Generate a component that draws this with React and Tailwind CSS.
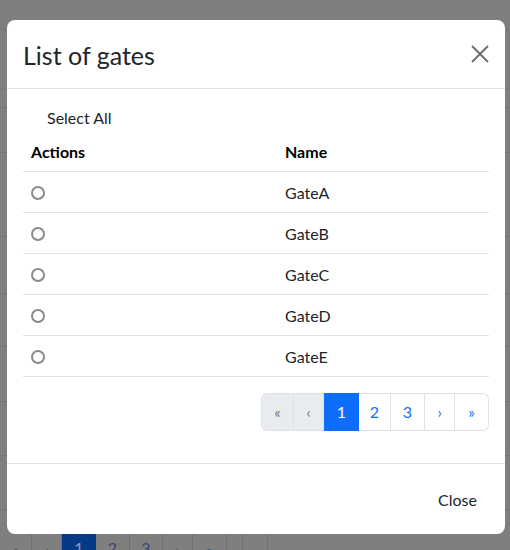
import React from "react";

const font = { fontFamily: '"Segoe UI", Lato, "Noto Sans", sans-serif' };

function Radio() {
  return <span className="block w-[14px] h-[14px] rounded-full border-2 border-[#8a8a8a] bg-white" />;
}

export default function App() {
  const gates = ["GateA", "GateB", "GateC", "GateD", "GateE"];
  const bgLines = [29, 89, 107, 152, 236, 293, 346, 401, 455, 509];
  return (
    <div className="relative w-[510px] h-[550px] overflow-hidden bg-[#7f7f7f]" style={font}>
      {/* background page (dimmed) */}
      {bgLines.map((y) => (
        <div key={y} className="absolute left-0 right-0 h-px bg-[#747474]" style={{ top: y }} />
      ))}
      <div className="absolute left-0 top-[534px] flex h-[40px] text-[#33447a] text-[16px] leading-[20px]">
        <div className="w-[32px] flex justify-center pt-[6px] border-r border-[#707070] text-[13px] text-[#3a3a3a]">«</div>
        <div className="w-[30px] flex justify-center pt-[6px] border-r border-[#707070] text-[13px] text-[#3a3a3a]">‹</div>
        <div className="w-[34px] flex justify-center pt-[4px] bg-[#063a85] text-[#8aa0c0]">1</div>
        <div className="w-[34px] flex justify-center pt-[4px] border-r border-[#707070]">2</div>
        <div className="w-[33px] flex justify-center pt-[4px] border-r border-[#707070]">3</div>
        <div className="w-[30px] flex justify-center pt-[6px] border-r border-[#707070] text-[13px]">›</div>
        <div className="w-[34px] flex justify-center pt-[6px] border-r border-[#707070] text-[13px]">»</div>
        <div className="w-[16px] border-r border-[#707070]" />
        <div className="w-[25px] border-r border-[#707070]" />
      </div>

      {/* modal */}
      <div className="absolute left-[7px] top-[20px] w-[498px] h-[514px] bg-white rounded-[8px] flex flex-col text-[#212529]">
        <div className="h-[69px] flex items-center justify-between px-[16px] border-b border-[#dee2e6]">
          <h4 className="text-[25px] leading-[36px] font-normal pt-[2px]">List of gates</h4>
          <svg width="18" height="18" viewBox="0 0 18 18">
            <path d="M1 1 L17 17 M17 1 L1 17" stroke="#6b6b6b" strokeWidth="1.8" />
          </svg>
        </div>
        <div className="px-[16px] pt-[16px] flex-1">
          <div className="pl-[24px] text-[16px] leading-[24px] pt-[1px] mb-[1px]">Select All</div>
          <div className="text-[16px] leading-[24px]">
            <div className="flex border-b border-[#dee2e6] font-bold text-black">
              <div className="w-[254px] px-[8px] pt-[9px] pb-[7px]">Actions</div>
              <div className="flex-1 px-[8px] pt-[9px] pb-[7px]">Name</div>
            </div>
            {gates.map((g) => (
              <div key={g} className="flex border-b border-[#dee2e6]">
                <div className="w-[254px] px-[8px] pt-[9px] pb-[7px] flex items-center">
                  <Radio />
                </div>
                <div className="flex-1 px-[8px] pt-[9px] pb-[7px]">{g}</div>
              </div>
            ))}
          </div>
          <div className="flex justify-end mt-[16px]">
            <div className="flex h-[38px] text-[16px] leading-[24px]">
              <div className="w-[33px] flex items-center justify-center bg-[#e9ecef] text-[#6c757d] text-[15px] border border-[#dee2e6] rounded-l-[6px]">«</div>
              <div className="w-[30px] flex items-center justify-center bg-[#e9ecef] text-[#6c757d] text-[15px] border border-l-0 border-[#dee2e6]">‹</div>
              <div className="w-[35px] flex items-center justify-center bg-[#0d6efd] text-white border border-[#0d6efd]">1</div>
              <div className="w-[32px] flex items-center justify-center text-[#0d6efd] border-y border-r border-[#dee2e6]">2</div>
              <div className="w-[34px] flex items-center justify-center text-[#0d6efd] border-y border-r border-[#dee2e6]">3</div>
              <div className="w-[30px] flex items-center justify-center text-[#0d6efd] text-[15px] border-y border-r border-[#dee2e6]">›</div>
              <div className="w-[34px] flex items-center justify-center text-[#0d6efd] text-[15px] border-y border-r border-[#dee2e6] rounded-r-[6px]">»</div>
            </div>
          </div>
        </div>
        <div className="h-[71px] border-t border-[#dee2e6] flex items-center justify-end pr-[16px]">
          <span className="px-[12px] text-[16px] leading-[24px] pt-[1px]">Close</span>
        </div>
      </div>
    </div>
  );
}
